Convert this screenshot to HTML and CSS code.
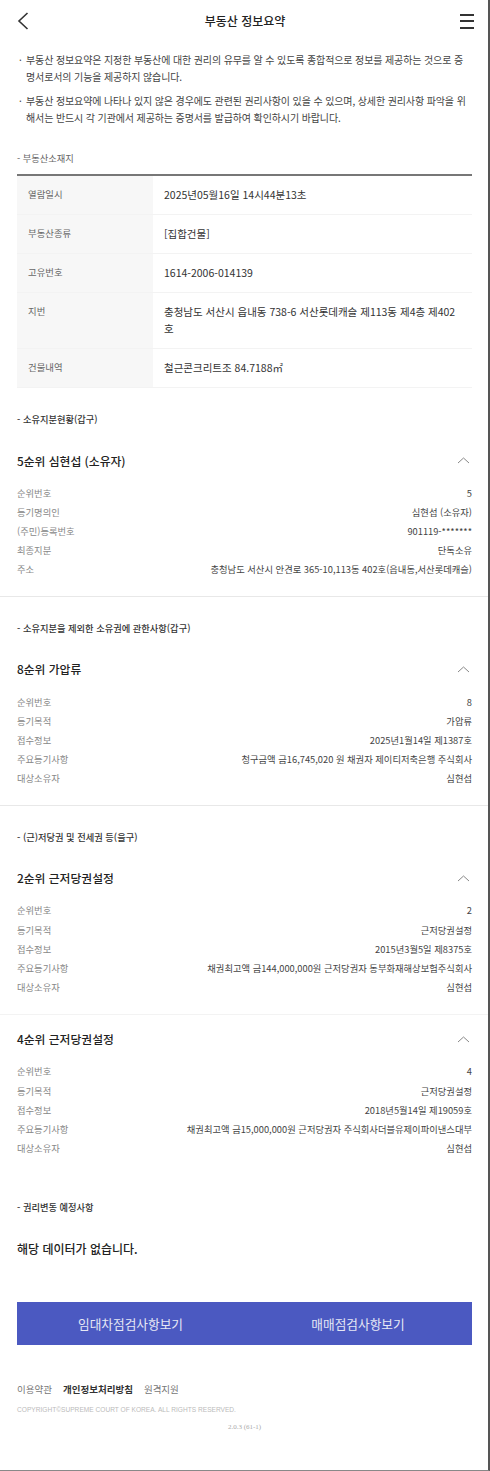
FILE: index.html
```html
<!DOCTYPE html>
<html lang="ko">
<head>
<meta charset="utf-8">
<title>부동산 정보요약</title>
<link rel="stylesheet" href="styles.css">
</head>
<body>
<div class="page">
  <header class="top">
    <svg class="back" width="12" height="18" viewBox="0 0 12 18"><path d="M10.5 1 L2 9 L10.5 17" fill="none" stroke="#333" stroke-width="1.6"/></svg>
    <h1>부동산 정보요약</h1>
    <div class="menu"><i></i><i></i><i></i></div>
  </header>
  <ul class="notes">
    <li>부동산 정보요약은 지정한 부동산에 대한 권리의 유무를 알 수 있도록 종합적으로 정보를 제공하는 것으로 증명서로서의 기능을 제공하지 않습니다.</li>
    <li>부동산 정보요약에 나타나 있지 않은 경우에도 관련된 권리사항이 있을 수 있으며, 상세한 권리사항 파악을 위해서는 반드시 각 기관에서 제공하는 증명서를 발급하여 확인하시기 바랍니다.</li>
  </ul>
  <h2 class="sec first">- 부동산소재지</h2>
  <table class="info">
    <tr><th>열람일시</th><td>2025년05월16일 14시44분13초</td></tr>
    <tr><th>부동산종류</th><td>[집합건물]</td></tr>
    <tr><th>고유번호</th><td>1614-2006-014139</td></tr>
    <tr><th>지번</th><td>충청남도 서산시 읍내동 738-6 서산롯데캐슬 제113동 제4층 제402호</td></tr>
    <tr><th>건물내역</th><td>철근콘크리트조 84.7188㎡</td></tr>
  </table>

  <h2 class="sec own">- 소유지분현황(갑구)</h2>
  <section class="item ruled">
    <div class="item-head"><h3>5순위 심현섭 (소유자)</h3><svg class="chev" width="14" height="8" viewBox="0 0 14 8"><path d="M2 7 L7.5 2 L13 7" fill="none" stroke="#888" stroke-width="1"/></svg></div>
    <dl>
      <div><dt>순위번호</dt><dd>5</dd></div>
      <div><dt>등기명의인</dt><dd>심현섭 (소유자)</dd></div>
      <div><dt>(주민)등록번호</dt><dd>901119-*******</dd></div>
      <div><dt>최종지분</dt><dd>단독소유</dd></div>
      <div><dt>주소</dt><dd>충청남도 서산시 안견로 365-10,113동 402호(읍내동,서산롯데캐슬)</dd></div>
    </dl>
  </section>

  <h2 class="sec">- 소유지분을 제외한 소유권에 관한사항(갑구)</h2>
  <section class="item ruled">
    <div class="item-head"><h3>8순위 가압류</h3><svg class="chev" width="14" height="8" viewBox="0 0 14 8"><path d="M2 7 L7.5 2 L13 7" fill="none" stroke="#888" stroke-width="1"/></svg></div>
    <dl>
      <div><dt>순위번호</dt><dd>8</dd></div>
      <div><dt>등기목적</dt><dd>가압류</dd></div>
      <div><dt>접수정보</dt><dd>2025년1월14일 제1387호</dd></div>
      <div><dt>주요등기사항</dt><dd>청구금액 금16,745,020 원 채권자 제이티저축은행 주식회사</dd></div>
      <div><dt>대상소유자</dt><dd>심현섭</dd></div>
    </dl>
  </section>

  <h2 class="sec">- (근)저당권 및 전세권 등(을구)</h2>
  <section class="item ruled-soft">
    <div class="item-head"><h3>2순위 근저당권설정</h3><svg class="chev" width="14" height="8" viewBox="0 0 14 8"><path d="M2 7 L7.5 2 L13 7" fill="none" stroke="#888" stroke-width="1"/></svg></div>
    <dl>
      <div><dt>순위번호</dt><dd>2</dd></div>
      <div><dt>등기목적</dt><dd>근저당권설정</dd></div>
      <div><dt>접수정보</dt><dd>2015년3월5일 제8375호</dd></div>
      <div><dt>주요등기사항</dt><dd>채권최고액 금144,000,000원 근저당권자 동부화재해상보험주식회사</dd></div>
      <div><dt>대상소유자</dt><dd>심현섭</dd></div>
    </dl>
  </section>
  <section class="item next">
    <div class="item-head"><h3>4순위 근저당권설정</h3><svg class="chev" width="14" height="8" viewBox="0 0 14 8"><path d="M2 7 L7.5 2 L13 7" fill="none" stroke="#888" stroke-width="1"/></svg></div>
    <dl>
      <div><dt>순위번호</dt><dd>4</dd></div>
      <div><dt>등기목적</dt><dd>근저당권설정</dd></div>
      <div><dt>접수정보</dt><dd>2018년5월14일 제19059호</dd></div>
      <div><dt>주요등기사항</dt><dd>채권최고액 금15,000,000원 근저당권자 주식회사더블유제이파이낸스대부</dd></div>
      <div><dt>대상소유자</dt><dd>심현섭</dd></div>
    </dl>
  </section>

  <h2 class="sec change">- 권리변동 예정사항</h2>
  <p class="empty">해당 데이터가 없습니다.</p>

  <div class="actions">
    <a class="lease">임대차점검사항보기</a>
    <a class="sale">매매점검사항보기</a>
  </div>

  <footer>
    <nav><a>이용약관</a><a class="strong">개인정보처리방침</a><a>원격지원</a></nav>
    <p class="copy">COPYRIGHT©SUPREME COURT OF KOREA. ALL RIGHTS RESERVED.</p>
    <p class="ver">2.0.3 (61-1)</p>
  </footer>
</div>
</body>
</html>
```
FILE: styles.css
```css
* { box-sizing: border-box; }
html, body { margin: 0; padding: 0; background: #fff; }
body {
  font-family: "Noto Sans CJK KR", "Noto Sans", sans-serif;
  color: #333;
}
.page {
  width: 490px;
  height: 1471px;
  border-right: 2px solid #555;
  border-bottom: 1px solid #888;
  overflow: hidden;
}
.top {
  height: 40px;
  padding: 0 14px 0 17px;
  display: flex;
  align-items: center;
  justify-content: space-between;
}
.top h1 {
  margin: 0 0 0 1px;
  font-size: 12px;
  font-weight: 500;
  color: #222;
}
.back { margin-top: 2px; }
.menu { width: 14px; height: 15px; display: flex; flex-direction: column; justify-content: space-between; margin-top: 2px; }
.menu i { display: block; height: 2px; background: #333; }
.notes {
  list-style: none;
  margin: 11px 0 0;
  padding: 0 18px 0 26px;
  font-size: 10px;
  letter-spacing: -0.12px;
  line-height: 17px;
  color: #444;
}
.notes li { position: relative; margin-bottom: 7px; }
.notes li::before {
  content: "·";
  position: absolute;
  left: -7px;
  top: 0;
}
.sec {
  margin: 0;
  padding: 0 17px;
  font-size: 9.25px;
  line-height: 14px;
  font-weight: 500;
  color: #333;
}
.sec.first { margin-top: 25px; font-weight: 400; color: #666; }
.info {
  margin: 8.5px 16px 0 17px;
  width: 455px;
  border-collapse: collapse;
  border-top: 2px solid #777;
  table-layout: fixed;
}
.info tr { border-bottom: 1px solid #f3f3f3; }
.info th {
  width: 136px;
  background: #f7f7f7;
  padding: 10px 0 0 11px;
  text-align: left;
  vertical-align: top;
  font-size: 9.4px;
  line-height: 16px;
  font-weight: 400;
  color: #666;
}
.info td {
  padding: 10.5px 12px 10.5px 11px;
  font-size: 10.5px;
  line-height: 17px;
  color: #333;
  word-break: break-all;
}
.sec.own { margin-top: 24.5px; }
.item { padding: 0 16px 0 17px; }
.item-head {
  display: flex;
  justify-content: space-between;
  align-items: center;
  height: 30px;
  margin-top: 19px;
}
.item-head h3 {
  margin: 0;
  font-size: 11.8px;
  font-weight: 500;
  color: #222;
}
.chev { margin-right: 2px; }
dl { margin: 8px 0 0; }
dl div {
  display: flex;
  justify-content: space-between;
  height: 19.2px;
  align-items: center;
  font-size: 9.3px;
}
dt { color: #888; }
dd { margin: 0; color: #444; }
.ruled { margin: 0; padding-bottom: 17px; border-bottom: 1px solid #e8e8e8; margin-bottom: 24px; }
.ruled-soft { padding-bottom: 17px; border-bottom: 1px solid #f3f3f3; }
.item.next .item-head { margin-top: 9px; }
.sec.change { margin-top: 42.5px; }
.empty {
  margin: 26px 17px 0;
  font-size: 12px;
  line-height: 18px;
  font-weight: 500;
  color: #222;
}
.actions {
  margin: 44px 16px 0 17px;
  height: 42.5px;
  background: #4b59c1;
  display: flex;
  align-items: center;
  color: #e6e8f5;
  font-size: 12.7px;
}
.actions .lease { width: 227px; text-align: center; }
.actions .sale { width: 228px; text-align: center; }
footer { padding: 0 16px 0 17px; margin-top: 37px; }
footer nav { display: flex; gap: 11px; font-size: 9.5px; line-height: 14px; color: #777; }
footer nav .strong { color: #333; font-weight: 700; }
.copy { margin: 9px 0 0; font-size: 6.6px; line-height: 9px; color: #bbb; font-family: "Liberation Sans", sans-serif; }
.ver { margin: 9px 0 0; font-size: 7px; font-weight: 400; line-height: 9px; color: #aaa; text-align: center; font-family: "Liberation Serif", serif; }
```
